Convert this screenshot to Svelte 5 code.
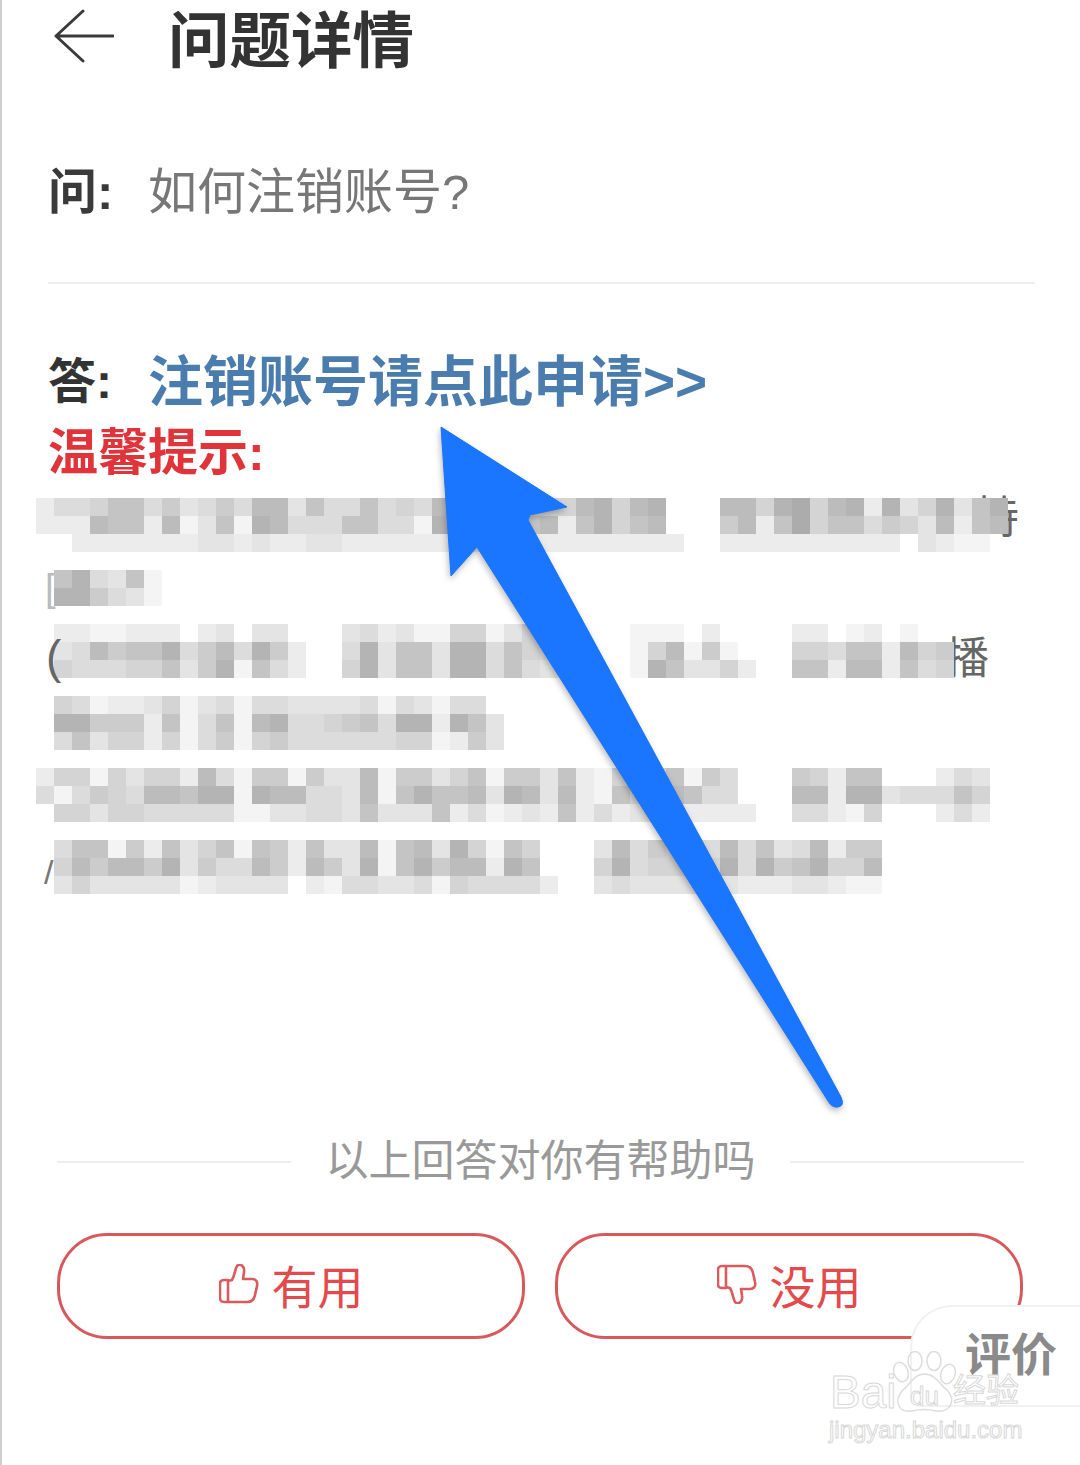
<script>
  // pixelated block, read off the screenshot: [row, first column, shades 0 (dark) to 9 (near white)]
  const runs = [
    [0, 0, '86653364764622736636562555555521521'], [0, 38, '2251052181751731'],
    [1, 0, '88823382973912666336691333332831532'], [1, 38, '4283053364572832'],
    [2, 2, '888888877878877888888' + '8888888888888'], [2, 38, '8888888888'], [2, 49, '78'], [2, 51, '99'],
    [4, 1, '316739'],
    [5, 1, '114679'],
    [7, 1, '8899888'], [7, 9, '87'], [7, 12, '77'], [7, 17, '768799559756'], [7, 33, '999'], [7, 37, '8'], [7, 42, '88'], [7, 45, '98'], [7, 48, '9'],
    [8, 1, '76243316426148'], [8, 17, '617337116356'], [8, 33, '952949'], [8, 42, '556338254'],
    [9, 1, '56665537419368'], [9, 17, '517337116367'], [9, 33, '9137758'], [9, 42, '338228365'],
    [11, 1, '569887597696677776967966'],
    [12, 1, '1144483963921665436118137'],
    [13, 1, '6375585964954666666559847'],
    [15, 0, '8559575582694494772944753944'], [15, 28, '73895553946'], [15, 42, '45833'], [15, 50, '867'],
    [16, 0, '6964562231191226672931332712'], [16, 28, '72893532366'], [16, 42, '22811766635'],
    [17, 1, '557556666699776673777386987'], [17, 28, '838687778888'], [17, 42, '66895'], [17, 50, '868'],
    [19, 1, '633948375393483772932715935'], [19, 31, '7264556263762844'],
    [20, 1, '524224174662482471931422813'], [20, 31, '5165555161431552'],
    [21, 1, '7577777987777'], [21, 15, '89667769566668'], [21, 31, '7677777788877899']
  ];

  const cells = [];
  for (const [row, from, shades] of runs) {
    [...shades].forEach((s, i) => {
      const grey = Math.round(172 + Number(s) * 8);
      cells.push({ row: row + 1, col: from + i + 1, bg: `rgb(${grey},${grey},${grey})` });
    });
  }
</script>

<div class="page">
  <header class="topbar">
    <svg class="back" viewBox="0 0 60 54" width="60" height="54">
      <path d="M29 2 L2 27 L29 52 M2 27 H59" fill="none" stroke="#3a3a3a" stroke-width="3" stroke-linecap="round" stroke-linejoin="round" />
    </svg>
    <h1>问题详情</h1>
  </header>

  <div class="question">
    <b>问:</b>
    <span>如何注销账号?</span>
  </div>
  <div class="divider"></div>

  <div class="answer">
    <b>答:</b>
    <span>注销账号请点此申请&gt;&gt;</span>
  </div>
  <div class="tip">温馨提示:</div>

  <div class="mosaic">
    <span class="bit chi">持</span>
    <span class="bit bo">播</span>
    <span class="bit bracket">[</span>
    <span class="bit slash">/</span>
    <div class="blocks">
      {#each cells as c}
        <i style="grid-row:{c.row};grid-column:{c.col};background:{c.bg}"></i>
      {/each}
    </div>
    <span class="bit paren">(</span>
  </div>

  <div class="feedback">
    <span class="rule"></span>
    <span class="label">以上回答对你有帮助吗</span>
    <span class="rule"></span>
  </div>

  <div class="buttons">
    <button>
      <svg viewBox="0 0 40 40" width="40" height="40">
        <path d="M9 17 L13 16 C16 11 16 5 18 2 C21 -1 26 2 25 8 L24 15 H33 C37 15 39 18 38 22 L36 31 C35 36 32 38 28 38 H5 C2 38 1 36 1 34 V19 C1 17 3 16 5 16 H9 V38" fill="none" stroke="#dc5a5e" stroke-width="2.6" stroke-linejoin="round" />
      </svg>
      有用
    </button>
    <button>
      <svg class="flip" viewBox="0 0 40 40" width="40" height="40">
        <path d="M9 17 L13 16 C16 11 16 5 18 2 C21 -1 26 2 25 8 L24 15 H33 C37 15 39 18 38 22 L36 31 C35 36 32 38 28 38 H5 C2 38 1 36 1 34 V19 C1 17 3 16 5 16 H9 V38" fill="none" stroke="#dc5a5e" stroke-width="2.6" stroke-linejoin="round" />
      </svg>
      没用
    </button>
  </div>

  <div class="rate">评价</div>

  <svg class="arrow" viewBox="0 0 1080 1465" width="1080" height="1465">
    <path d="M441 427 L567 507 L530 515 L528 520 L841 1097 Q845 1106 838 1107 Q832 1108 828 1101 L477 547 L451 576 Z" fill="#1a75ff" stroke="#1a75ff" stroke-width="1" stroke-linejoin="round" />
  </svg>

  <div class="watermark">
    <span class="wm-bai">Bai</span>
    <svg class="paw" viewBox="0 0 70 64" width="70" height="64">
      <g fill="none" stroke="#ddd" stroke-width="1.5">
        <ellipse cx="11" cy="21" rx="7" ry="10" transform="rotate(-20 11 21)" />
        <ellipse cx="25" cy="10" rx="7" ry="9.5" />
        <ellipse cx="44" cy="10" rx="7" ry="9.5" />
        <ellipse cx="58" cy="23" rx="7" ry="10" transform="rotate(20 58 23)" />
        <path d="M34 23 C46 23 50 34 58 40 C66 50 60 62 46 60 C38 58 30 58 22 60 C8 62 4 50 12 40 C20 34 24 23 34 23 Z" />
      </g>
    </svg>
    <span class="wm-du">du</span>
    <span class="wm-jy">经验</span>
    <span class="wm-url">jingyan.baidu.com</span>
  </div>
</div>

<style>
  :global(body) {
    background: #fff;
  }

  .page {
    position: relative;
    width: 1080px;
    height: 1465px;
    box-sizing: border-box;
    padding-left: 46px;
    border-left: 2px solid #cfcfcf;
    overflow: hidden;
    background: #fff;
    font-family: "Liberation Sans", "Noto Sans CJK SC", sans-serif;
  }

  .topbar {
    display: flex;
    align-items: center;
    gap: 54px;
    height: 84px;
    padding-left: 6px;
  }

  .back {
    margin-top: -12px;
  }

  h1 {
    margin: 0;
    font-size: 61.5px;
    font-weight: 700;
    line-height: 80px;
    color: #333;
  }

  .question {
    display: flex;
    align-items: center;
    gap: 28px;
    height: 80px;
    margin-top: 63px;
    font-size: 49px;
    color: #777;
  }

  .question b {
    width: 72px;
    color: #3a3a3a;
  }

  .divider {
    width: 987px;
    height: 2px;
    margin-top: 55px;
    background: #eee;
  }

  .answer {
    display: flex;
    align-items: center;
    height: 80px;
    margin-top: 53px;
  }

  .answer b {
    width: 100px;
    font-size: 48px;
    color: #333;
  }

  .answer span {
    font-size: 55px;
    font-weight: 700;
    color: #4a7cae;
  }

  .tip {
    height: 64px;
    margin-top: 4px;
    font-size: 50px;
    font-weight: 700;
    line-height: 64px;
    color: #e0343a;
  }

  .mosaic {
    position: relative;
    margin-top: 13px;
    margin-left: -12px;
  }

  .blocks {
    position: relative;
    display: grid;
    grid-template-columns: repeat(54, 18px);
    grid-template-rows: repeat(22, 18px);
    filter: blur(0.7px);
  }

  .bit {
    position: absolute;
    font-size: 44px;
    line-height: 50px;
    color: #666;
  }

  .chi {
    left: 939px;
    top: -5px;
  }

  .bo {
    left: 909px;
    top: 136px;
  }

  .paren {
    left: 10px;
    top: 134px;
    font-size: 46px;
  }

  .bracket {
    left: 9px;
    top: 65px;
    font-size: 38px;
    color: #bbb;
  }

  .slash {
    left: 8px;
    top: 349px;
    font-size: 34px;
    color: #777;
  }

  .feedback {
    display: flex;
    align-items: center;
    justify-content: space-between;
    width: 967px;
    height: 60px;
    margin-top: 233px;
    margin-left: 9px;
  }

  .rule {
    width: 234px;
    height: 2px;
    margin-top: 10px;
    background: #eee;
  }

  .label {
    font-size: 43px;
    color: #999;
    white-space: nowrap;
  }

  .buttons {
    display: flex;
    gap: 30px;
    margin-top: 46px;
    margin-left: 9px;
  }

  button {
    display: flex;
    align-items: center;
    justify-content: center;
    gap: 13px;
    width: 468px;
    height: 106px;
    padding: 0 0 4px;
    border: 3px solid #d9585c;
    border-radius: 50px;
    background: #fff;
    font-family: inherit;
    font-size: 46px;
    color: #e24a4c;
  }

  .flip {
    transform: scaleY(-1);
  }

  .rate {
    position: absolute;
    right: 0;
    top: 1305px;
    box-sizing: border-box;
    width: 170px;
    height: 102px;
    padding: 20px 0 0 53px;
    border: 2px solid #f1f1f1;
    border-right: none;
    border-radius: 42px 0 0 12px;
    background: #fff;
    font-size: 46px;
    font-weight: 700;
    line-height: 56px;
    color: #8a8a8a;
  }

  .arrow {
    position: absolute;
    left: -2px;
    top: 0;
    pointer-events: none;
    filter: drop-shadow(-1px 3px 3px rgba(0, 0, 0, 0.28));
  }

  .watermark {
    position: absolute;
    left: 826px;
    top: 1345px;
    width: 200px;
    height: 100px;
  }

  .watermark span {
    position: absolute;
    color: #fff;
    -webkit-text-stroke: 1px #d8d8d8;
    white-space: nowrap;
  }

  .paw {
    position: absolute;
    left: 62px;
    top: 6px;
  }

  .wm-bai {
    left: 2px;
    top: 22px;
    font-size: 46px;
    line-height: 50px;
  }

  .wm-du {
    left: 82px;
    top: 36px;
    font-size: 26px;
    line-height: 30px;
  }

  .wm-jy {
    left: 125px;
    top: 24px;
    font-size: 33px;
    line-height: 44px;
  }

  .wm-url {
    left: 1px;
    top: 70px;
    font-size: 24px;
    line-height: 30px;
  }
</style>
